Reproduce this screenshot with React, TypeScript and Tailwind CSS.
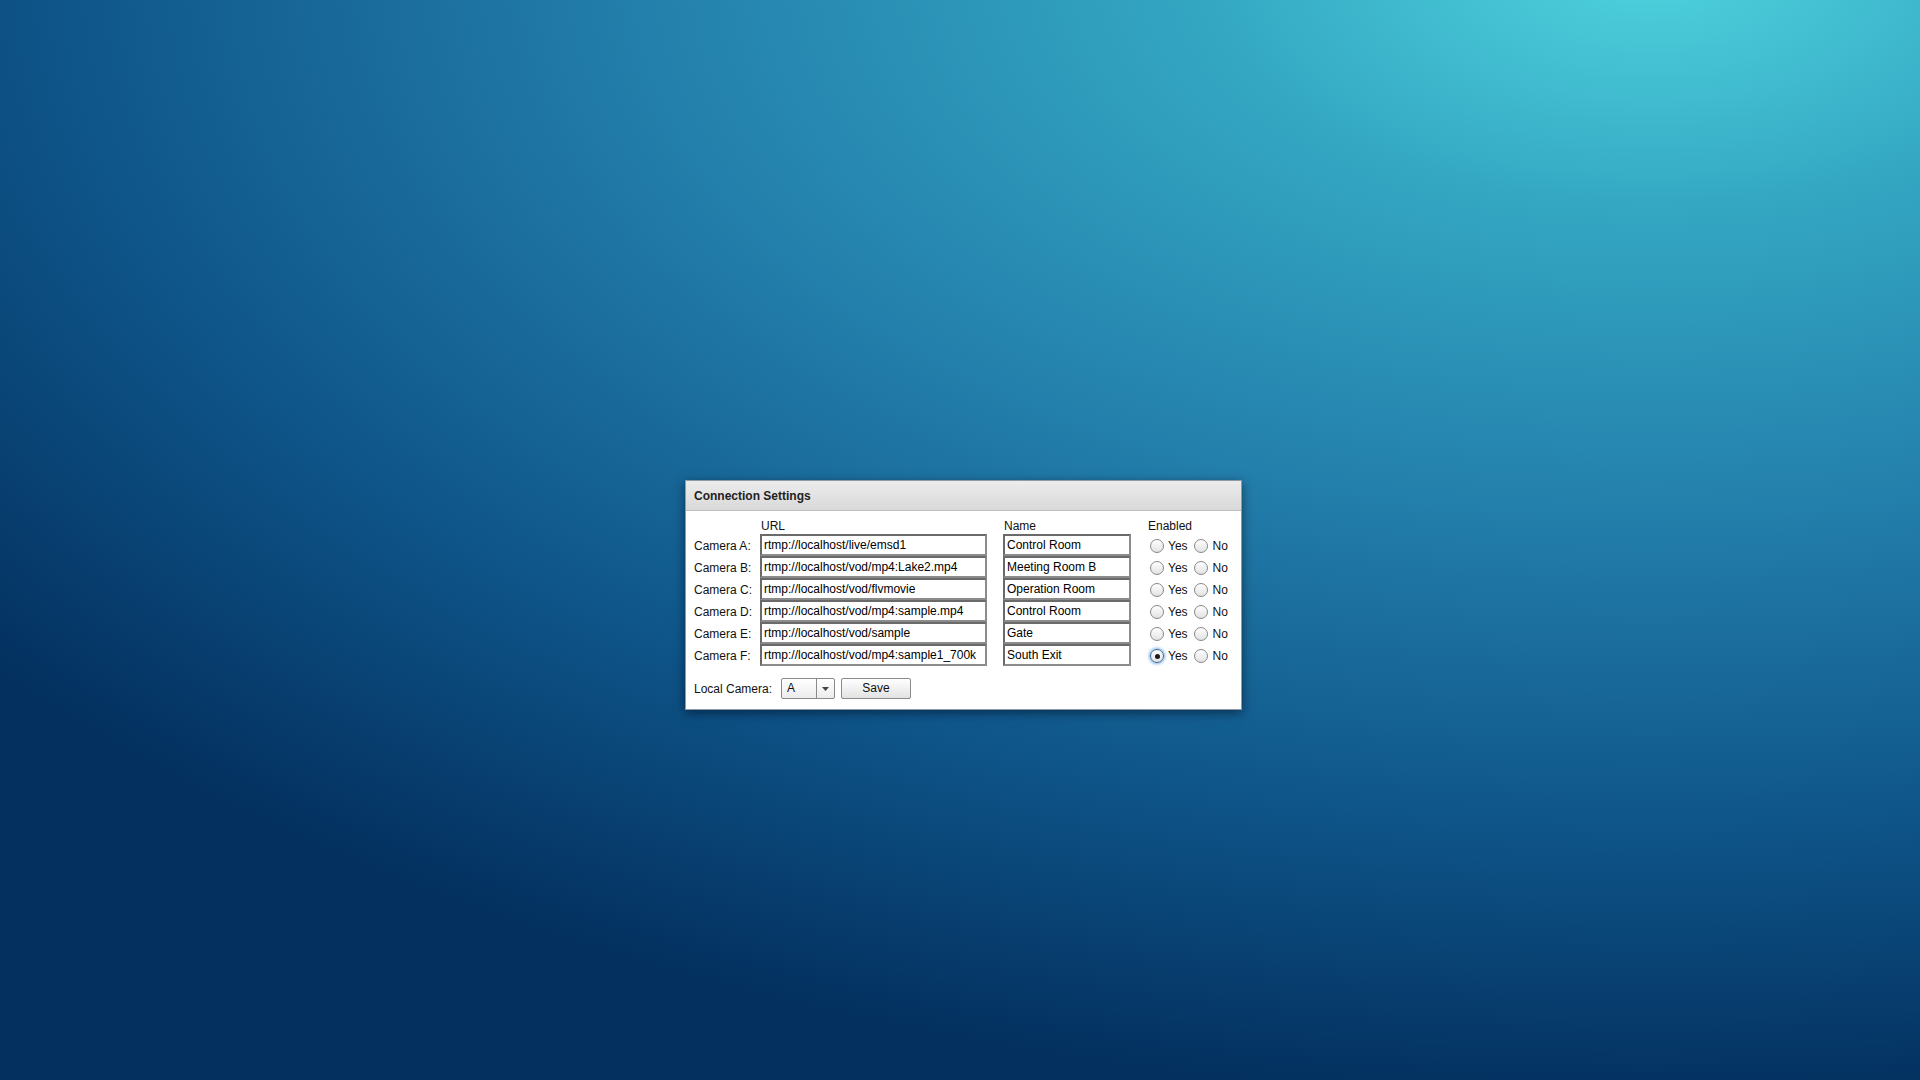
import React, { useState } from 'react';

// ==================== Data ====================
interface Camera {
  id: string;
  url: string;
  name: string;
}

const cameras: Camera[] = [
  { id: 'A', url: 'rtmp://localhost/live/emsd1', name: 'Control Room' },
  { id: 'B', url: 'rtmp://localhost/vod/mp4:Lake2.mp4', name: 'Meeting Room B' },
  { id: 'C', url: 'rtmp://localhost/vod/flvmovie', name: 'Operation Room' },
  { id: 'D', url: 'rtmp://localhost/vod/mp4:sample.mp4', name: 'Control Room' },
  { id: 'E', url: 'rtmp://localhost/vod/sample', name: 'Gate' },
  { id: 'F', url: 'rtmp://localhost/vod/mp4:sample1_700k', name: 'South Exit' },
];

// ==================== Radio ====================
const Radio: React.FC<{ checked: boolean; onClick: () => void }> = ({ checked, onClick }) => (
  <span
    onClick={onClick}
    className={`flex items-center justify-center w-[14px] h-[14px] rounded-full border cursor-pointer bg-gradient-to-b from-white to-[#e2e2e2] ${
      checked ? 'border-[#3f6790] shadow-[0_0_3px_1px_rgba(80,150,230,0.75)]' : 'border-[#888]'
    }`}
  >
    {checked && <span className="w-[5px] h-[5px] rounded-full bg-[#1a1a1a]" />}
  </span>
);

// ==================== Row ====================
const inputCls =
  'h-[22px] -mt-px border-2 border-t-[#6a6a6a] border-l-[#6a6a6a] border-r-[#8c8c8c] border-b-[#8c8c8c] bg-white px-[2px] text-[12px] text-black outline-none';

const CameraRow: React.FC<{ cam: Camera; enabled: boolean | null; onChange: (v: boolean) => void }> = ({
  cam,
  enabled,
  onChange,
}) => (
  <div className="flex items-start h-[22px]">
    <div className="w-[66px] pt-[4px] leading-[14px]">Camera {cam.id}:</div>
    <input readOnly value={cam.url} className={`w-[227px] ${inputCls}`} />
    <input readOnly value={cam.name} className={`ml-[16px] w-[128px] ${inputCls}`} />
    <div className="ml-[19px] pt-[4px] flex items-center leading-[14px]">
      <Radio checked={enabled === true} onClick={() => onChange(true)} />
      <span className="ml-[4px]">Yes</span>
      <span className="ml-[6px]">
        <Radio checked={enabled === false} onClick={() => onChange(false)} />
      </span>
      <span className="ml-[5px]">No</span>
    </div>
  </div>
);

// ==================== App ====================
export default function App() {
  const [enabled, setEnabled] = useState<Record<string, boolean | null>>({
    A: null,
    B: null,
    C: null,
    D: null,
    E: null,
    F: true,
  });

  return (
    <div
      className="w-[1920px] h-[1080px] overflow-hidden pl-[685px] pt-[480px] bg-[radial-gradient(ellipse_110%_105%_at_86%_-3%,#4fd3de_0%,#33a6c2_22%,#237fab_48%,#0f568a_75%,#03305f_100%)]"
      style={{ fontFamily: '"Liberation Sans", Arial, sans-serif' }}
    >
      <div className="w-[557px] h-[230px] bg-white border border-[#8d9ba6] shadow-[0_3px_10px_rgba(0,10,30,0.55)] text-[12px] text-[#111]">
        {/* Header */}
        <div className="h-[30px] flex items-center pl-[8px] bg-gradient-to-b from-[#ececec] to-[#d9d9d9] border-b border-[#bdbdbd]">
          <span className="font-bold text-[12px] text-[#222]">Connection Settings</span>
        </div>

        {/* Body */}
        <div className="pl-[8px] pt-[8px]">
          <div className="flex h-[14px] leading-[14px] mb-[2px]">
            <div className="w-[67px]" />
            <div className="w-[243px]">URL</div>
            <div className="w-[144px]">Name</div>
            <div>Enabled</div>
          </div>

          {cameras.map((cam) => (
            <CameraRow
              key={cam.id}
              cam={cam}
              enabled={enabled[cam.id]}
              onChange={(v) => setEnabled((e) => ({ ...e, [cam.id]: v }))}
            />
          ))}

          {/* Footer */}
          <div className="flex items-center mt-[11px]">
            <span>Local Camera:</span>
            <div className="ml-[9px] flex h-[21px] w-[54px] border border-[#8a8a8a] rounded-[2px] bg-gradient-to-b from-white to-[#ececec]">
              <span className="flex-1 pl-[5px] leading-[19px]">A</span>
              <span className="w-[18px] border-l border-[#8a8a8a] flex items-center justify-center">
                <svg width="7" height="4" viewBox="0 0 7 4">
                  <path d="M0 0h7L3.5 4z" fill="#444" />
                </svg>
              </span>
            </div>
            <button className="ml-[6px] h-[21px] w-[70px] border border-[#8a8a8a] rounded-[2px] bg-gradient-to-b from-white to-[#e2e2e2] text-[12px] text-[#111] leading-[19px]">
              Save
            </button>
          </div>
        </div>
      </div>
    </div>
  );
}
